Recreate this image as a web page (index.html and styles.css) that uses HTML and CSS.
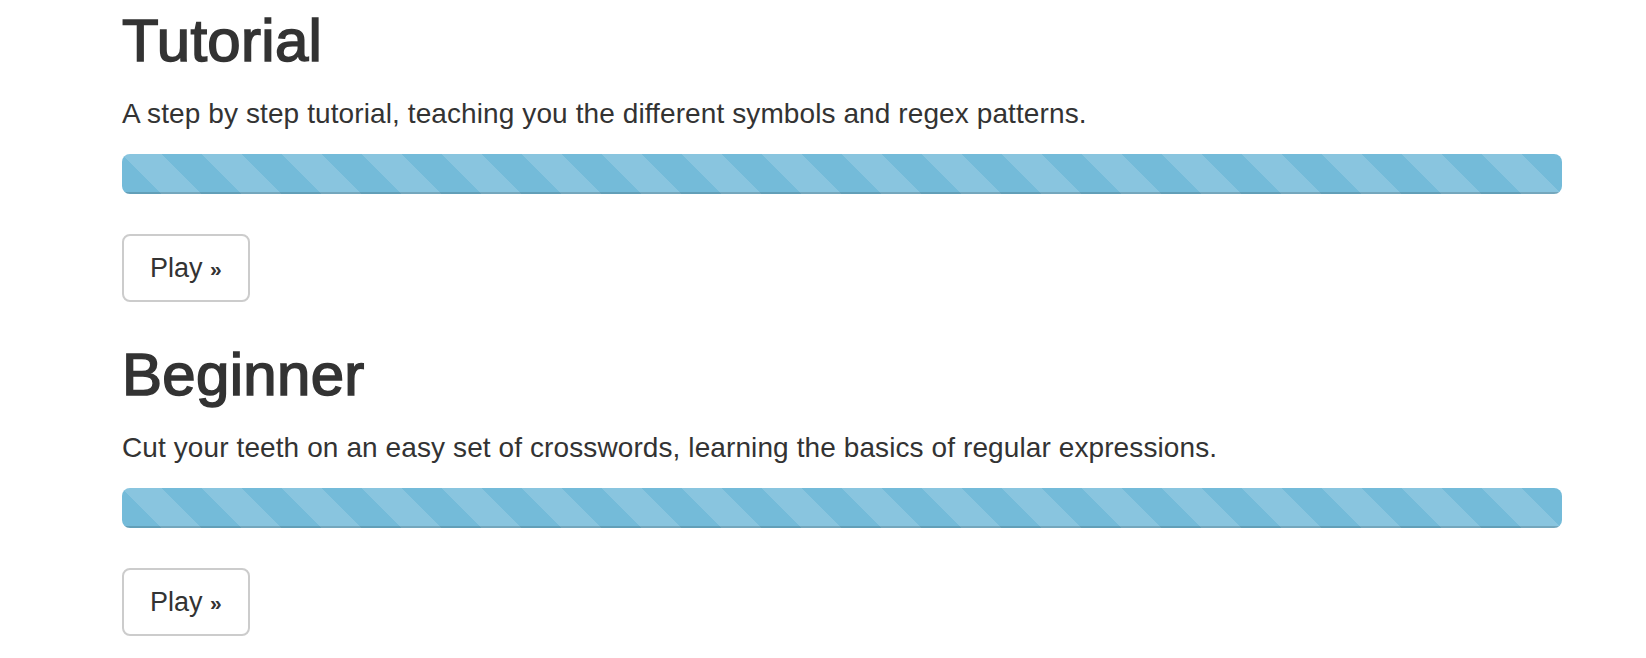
FILE: index.html
```html
<!DOCTYPE html>
<html lang="en">
<head>
<meta charset="utf-8">
<title>Regex Crosswords</title>
<link rel="stylesheet" href="styles.css">
</head>
<body>
<div class="container">
  <section class="level">
    <h2 class="level-title">Tutorial</h2>
    <p class="level-desc">A step by step tutorial, teaching you the different symbols and regex patterns.</p>
    <div class="progress"><div class="progress-bar" style="width: 100%"></div></div>
    <a class="btn" href="#">Play <span class="raquo">&raquo;</span></a>
  </section>
  <section class="level">
    <h2 class="level-title">Beginner</h2>
    <p class="level-desc">Cut your teeth on an easy set of crosswords, learning the basics of regular expressions.</p>
    <div class="progress"><div class="progress-bar" style="width: 100%"></div></div>
    <a class="btn" href="#">Play <span class="raquo">&raquo;</span></a>
  </section>
</div>
</body>
</html>
```
FILE: styles.css
```css
html, body {
  margin: 0;
  padding: 0;
  background: #fff;
}
body {
  font-family: "Liberation Sans", Arial, Helvetica, sans-serif;
  color: #333;
  font-size: 28px;
  line-height: 40px;
}
.container {
  width: 1440px;
  padding: 8px 0 0 122px;
}
.level {
  display: flex;
  flex-direction: column;
  align-items: flex-start;
  margin-bottom: 40px;
}
.level-title {
  font-size: 60px;
  line-height: 66px;
  font-weight: 400;
  -webkit-text-stroke: 1.6px #333;
  letter-spacing: 0.3px;
  margin: 0 0 20px;
  color: #333;
}
.level-desc {
  margin: 0 0 20px;
  font-size: 28px;
  line-height: 40px;
  letter-spacing: 0.1px;
}
.progress {
  align-self: stretch;
  height: 40px;
  border-radius: 8px;
  overflow: hidden;
  background: #f5f5f5;
  margin-bottom: 40px;
}
.progress-bar {
  height: 100%;
  background-color: #74bbd9;
  background-image: linear-gradient(45deg, rgba(255,255,255,.15) 25%, transparent 25%, transparent 50%, rgba(255,255,255,.15) 50%, rgba(255,255,255,.15) 75%, transparent 75%, transparent);
  background-size: 80px 80px;
  box-shadow: inset 0 -2px 0 rgba(0,0,0,.15);
}
.btn {
  display: inline-block;
  box-sizing: border-box;
  height: 68px;
  padding: 12px 26px;
  border: 2px solid #ccc;
  border-radius: 8px;
  color: #333;
  background: #fff;
  text-decoration: none;
  font-size: 27px;
  line-height: 40px;
}
.raquo {
  font-size: 21px;
  font-weight: 700;
  position: relative;
  top: -1px;
}
```
